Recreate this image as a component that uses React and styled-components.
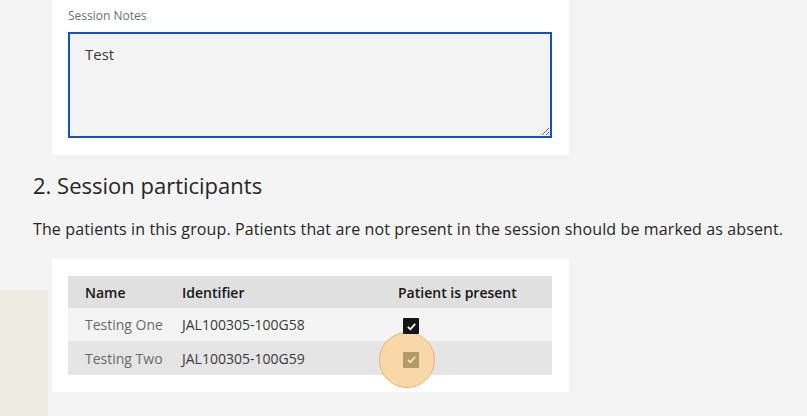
import React from 'react'
import styled, { createGlobalStyle } from 'styled-components'

const GlobalStyle = createGlobalStyle`
  html, body {
    margin: 0;
    padding: 0;
    background: #f4f4f4;
    font-family: 'Open Sans', 'Liberation Sans', Arial, sans-serif;
    color: #161616;
    overflow: hidden;
  }
`

const Page = styled.div`
  position: relative;
  width: 807px;
  height: 416px;
  overflow: hidden;
`

const Content = styled.main`
  position: relative;
  z-index: 1;
  padding-left: 33px;
  display: flex;
  flex-direction: column;
`

const SideTile = styled.div`
  position: absolute;
  left: 0;
  top: 290px;
  width: 48px;
  bottom: 0;
  background: #efece2;
  z-index: 0;
`

const Card = styled.section`
  margin-left: 19px;
  width: 517px;
  box-sizing: border-box;
  background: #fff;
  padding: ${(p) => p.$pad || '17px 16px'};
`

const Label = styled.label`
  display: block;
  font-size: 12px;
  line-height: 16px;
  color: #6f6f6f;
  margin-bottom: 8px;
`

const Notes = styled.textarea`
  display: block;
  width: 100%;
  height: 106px;
  box-sizing: border-box;
  background: #f3f3f3;
  border: 2px solid #1652c6;
  border-radius: 0;
  outline: none;
  padding: 10px 15px;
  font-family: inherit;
  font-size: 15px;
  line-height: 20px;
  color: #393939;
  resize: vertical;
`

const Heading = styled.h2`
  margin: 16px 0 0;
  font-size: 22px;
  font-weight: 400;
  line-height: 28px;
  color: #262626;
`

const Lead = styled.p`
  margin: 18px 0 18px;
  font-size: 16px;
  letter-spacing: 0.12px;
  line-height: 24px;
  color: #262626;
  white-space: nowrap;
`

const Table = styled.table`
  width: 100%;
  table-layout: fixed;
  border-collapse: collapse;
  font-size: 14px;
`

const Th = styled.th`
  text-align: left;
  font-weight: 600;
  color: #161616;
  background: #e0e0e0;
  height: 32px;
  padding: 0 0 0 17px;
  white-space: nowrap;
  width: ${(p) => p.$w || 'auto'};
`

const Row = styled.tr`
  background: ${(p) => (p.$hover ? '#e5e5e5' : '#f4f4f4')};
`

const Td = styled.td`
  height: ${(p) => p.$h || '33px'};
  padding: 0 0 0 17px;
  white-space: nowrap;
  color: ${(p) => (p.$dark ? '#393939' : '#6a6a6a')};
`

const CheckWrap = styled.span`
  position: relative;
  display: inline-flex;
  align-items: center;
  justify-content: center;
  width: 16px;
  height: 16px;
  vertical-align: middle;
  margin-left: 5px;
`

const Box = styled.span`
  position: relative;
  z-index: 1;
  display: inline-flex;
  align-items: center;
  justify-content: center;
  width: 16px;
  height: 16px;
  background: ${(p) => p.$bg};
  border-radius: 1px;
`

const Spot = styled.span`
  position: absolute;
  left: 50%;
  top: 50%;
  width: 56px;
  height: 56px;
  margin: -28px 0 0 -32px;
  border-radius: 50%;
  background: #f8d8a6;
  border: 1.5px solid #e9b271;
  box-sizing: border-box;
  pointer-events: none;
`

function Check({ bg, tick, highlight }) {
  return (
    <CheckWrap>
      {highlight && <Spot />}
      <Box $bg={bg}>
        <svg width="11" height="11" viewBox="0 0 12 12">
          <path d="M2 6.3 L4.8 9 L10 3.2" fill="none" stroke={tick} strokeWidth="1.9" />
        </svg>
      </Box>
    </CheckWrap>
  )
}

const patients = [
  { name: 'Testing One', id: 'JAL100305-100G58', h: '33px' },
  { name: 'Testing Two', id: 'JAL100305-100G59', h: '34px', hover: true },
]

export default function App() {
  return (
    <Page>
      <GlobalStyle />
      <SideTile />
      <Content>
        <Card $pad="8px 17px 17px 16px">
          <Label>Session Notes</Label>
          <Notes defaultValue="Test" />
        </Card>
        <Heading>2. Session participants</Heading>
        <Lead>
          The patients in this group. Patients that are not present in the session should be marked as absent.
        </Lead>
        <Card $pad="17px 17px 17px 16px">
          <Table>
            <thead>
              <tr>
                <Th $w="80px">Name</Th>
                <Th $w="199px">Identifier</Th>
                <Th>Patient is present</Th>
              </tr>
            </thead>
            <tbody>
              {patients.map((p) => (
                <Row key={p.id} $hover={p.hover}>
                  <Td $h={p.h}>{p.name}</Td>
                  <Td $h={p.h} $dark>{p.id}</Td>
                  <Td $h={p.h}>
                    {p.hover ? (
                      <Check bg="#b19a68" tick="#f3e4c4" highlight />
                    ) : (
                      <Check bg="#161616" tick="#ffffff" />
                    )}
                  </Td>
                </Row>
              ))}
            </tbody>
          </Table>
        </Card>
      </Content>
    </Page>
  )
}
